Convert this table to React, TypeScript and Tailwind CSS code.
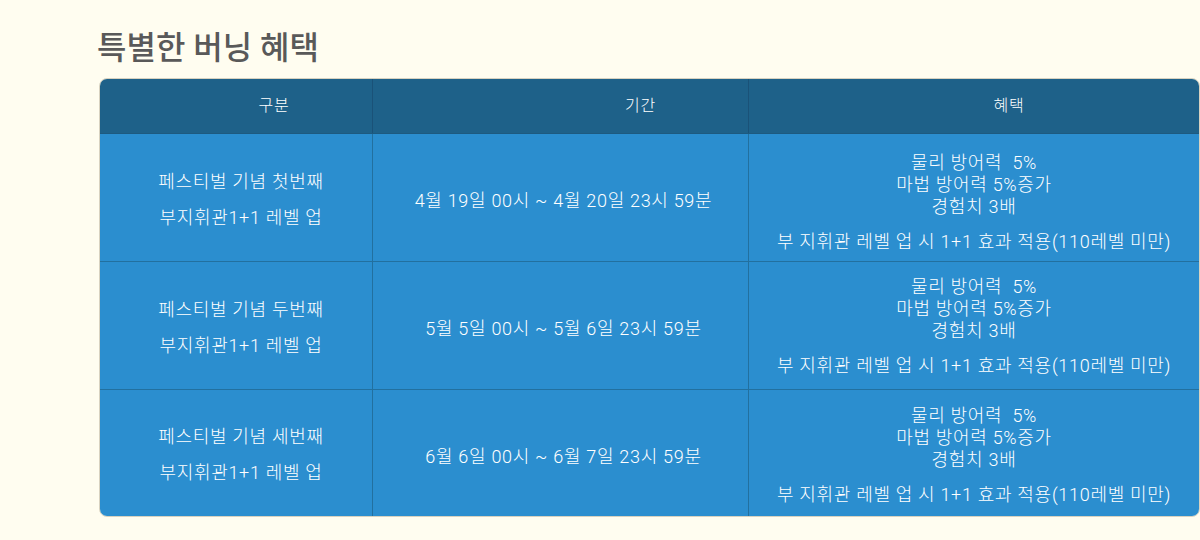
import React from "react";

const rows = [
  { name: "페스티벌 기념 첫번째", period: "4월 19일 00시 ~ 4월 20일 23시 59분", bp: "pt-[10px]" },
  { name: "페스티벌 기념 두번째", period: "5월 5일 00시 ~ 5월 6일 23시 59분", bp: "pt-[2px]" },
  { name: "페스티벌 기념 세번째", period: "6월 6일 00시 ~ 6월 7일 23시 59분", bp: "pt-[4px]" },
];

export default function App() {
  return (
    <div
      className="w-[1200px] h-[540px] bg-[#fffdf0] overflow-hidden"
      style={{ fontFamily: 'Roboto, "Noto Sans CJK KR", sans-serif' }}
    >
      <div className="pl-[97px] pt-[27px]">
        <h1 className="text-[32px] leading-[42px] font-medium text-[#595959]">특별한 버닝 혜택</h1>
        <div className="mt-[9px] ml-[2px] w-[1101px] rounded-[8px] overflow-hidden border border-[#d8d2c0] text-white font-light tracking-[0.7px]">
          <div className="grid grid-cols-[273px_376px_1fr] h-[55px] bg-[#1e6189] text-[16px] border-b border-[#1d5a80]">
            <div className="flex items-center justify-center border-r border-[#1a5278] pl-[76px]">구분</div>
            <div className="flex items-center justify-center border-r border-[#1a5278] pl-[160px]">기간</div>
            <div className="flex items-center justify-center pl-[70px]">혜택</div>
          </div>
          {rows.map((r, i) => (
            <div
              key={i}
              className={`grid grid-cols-[273px_376px_1fr] bg-[#2b8ecf] text-[18px] ${i < 2 ? "h-[128px] border-b border-[#22709f]" : "h-[126px]"}`}
            >
              <div className="flex flex-col items-center justify-center border-r border-[#22709f] leading-[36px] pt-[4px] pl-[10px]">
                <div>{r.name}</div>
                <div>부지휘관1+1 레벨 업</div>
              </div>
              <div className="flex items-center justify-center border-r border-[#22709f] pt-[6px] pl-[6px]">{r.period}</div>
              <div className={`flex flex-col items-center justify-center text-center ${r.bp}`}>
                <div className="leading-[22px]">물리 방어력&nbsp; 5%</div>
                <div className="leading-[22px]">마법 방어력 5%증가</div>
                <div className="leading-[22px]">경험치 3배</div>
                <div className="leading-[22px] mt-[13px]">부 지휘관 레벨 업 시 1+1 효과 적용(110레벨 미만)</div>
              </div>
            </div>
          ))}
        </div>
      </div>
    </div>
  );
}
